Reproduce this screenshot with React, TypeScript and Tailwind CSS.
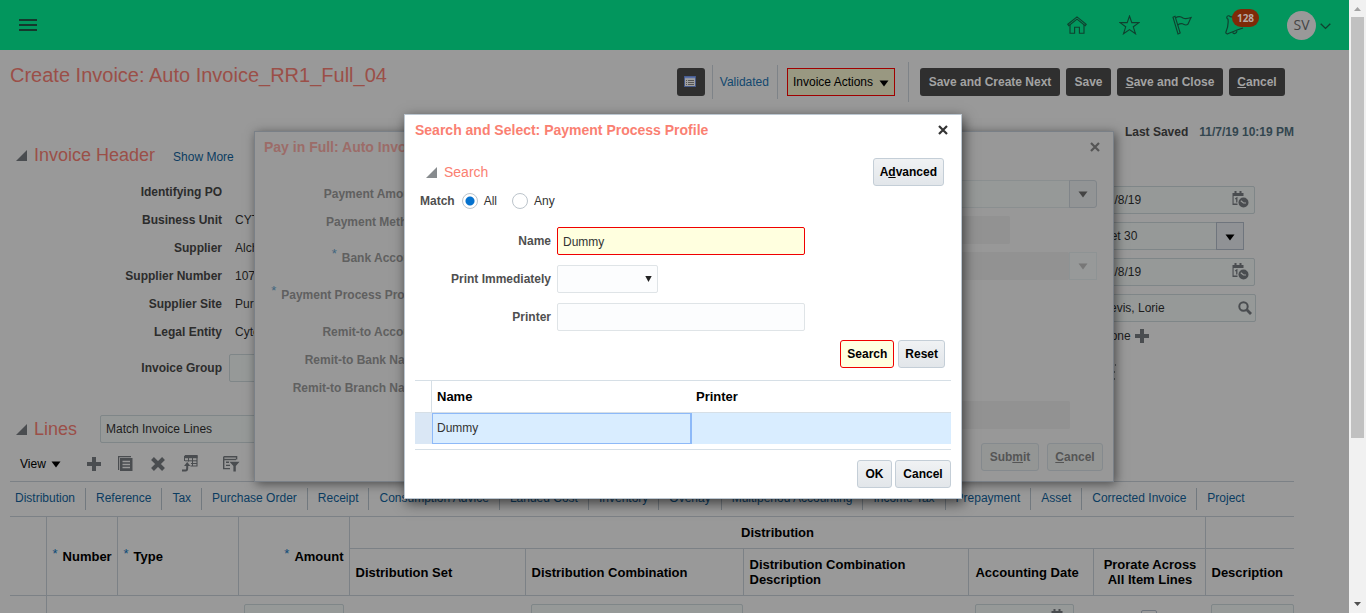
import type { ReactNode } from "react";

const sans = "font-['Liberation_Sans',Arial,sans-serif]";

function Triangle({ className = "" }: { className?: string }) {
  return (
    <svg className={className} width="11" height="11" viewBox="0 0 11 11" aria-hidden="true">
      <path d="M11 0V11H0Z" fill="currentColor" />
    </svg>
  );
}

function Caret({ className = "" }: { className?: string }) {
  return (
    <svg className={className} width="10" height="7" viewBox="0 0 10 7" aria-hidden="true">
      <path d="M0.5 0.5H9.5L5 6.5Z" fill="currentColor" />
    </svg>
  );
}

function CloseIcon() {
  return (
    <svg width="10" height="10" viewBox="0 0 10 10" aria-hidden="true">
      <path d="M1 1L9 9M9 1L1 9" stroke="currentColor" strokeWidth="2.2" fill="none" />
    </svg>
  );
}

function PlusIcon() {
  return (
    <svg width="14" height="14" viewBox="0 0 14 14" aria-hidden="true">
      <path d="M5 0H9V5H14V9H9V14H5V9H0V5H5Z" fill="currentColor" />
    </svg>
  );
}

function CalendarClock() {
  return (
    <svg width="17" height="17" viewBox="0 0 17 17" aria-hidden="true">
      <path d="M0.5 2H11.5V5H1.6V12.6H5.5V14H0.5Z" fill="currentColor" />
      <path d="M2.5 0H4.5V3H2.5ZM7.5 0H9.5V3H7.5Z" fill="currentColor" />
      <path d="M3.2 8L4.8 7V11.4" fill="none" stroke="currentColor" strokeWidth="1.3" />
      <circle cx="11.5" cy="11.5" r="5.8" fill="#979998" />
      <circle cx="11.5" cy="11.5" r="5" fill="currentColor" />
      <path d="M8.8 9.8L11.5 12H14" fill="none" stroke="#989a99" strokeWidth="1.2" />
    </svg>
  );
}

function TopBar() {
  return (
    <header className="flex h-[50px] shrink-0 items-center justify-between bg-[#02965d] pr-[18px] pl-[19px] text-[#10402f]">
      <button type="button" aria-label="Navigator" className="text-[#15392d]">
        <svg width="18" height="13" viewBox="0 0 18 13" aria-hidden="true">
          <path d="M0 1H18M0 6H18M0 11H18" stroke="currentColor" strokeWidth="2" />
        </svg>
      </button>
      <div className="flex items-center">
        <button type="button" aria-label="Home" className="mr-8">
          <svg width="20" height="18" viewBox="0 0 20 18" fill="none" stroke="currentColor" strokeWidth="1.1" aria-hidden="true">
            <path d="M0.8 8.3L10 0.9L19.2 8.3L18.2 9.6L10 3.1L1.8 9.6Z" />
            <path d="M3 8.8V17.3H7.6V11.3H12.4V17.3H17V8.8" />
          </svg>
        </button>
        <button type="button" aria-label="Favorites" className="mr-8">
          <svg width="21" height="20" viewBox="0 0 21 20" fill="none" stroke="currentColor" strokeWidth="1.1" aria-hidden="true">
            <path d="M10.5 1L12.8 7.6H20L14.3 11.8L16.5 18.8L10.5 14.6L4.5 18.8L6.7 11.8L1 7.6H8.2Z" />
          </svg>
        </button>
        <button type="button" aria-label="Watchlist" className="mr-8">
          <svg width="20" height="20" viewBox="0 0 20 20" fill="none" stroke="currentColor" strokeWidth="1.1" aria-hidden="true">
            <path d="M1 2.2L3 1.2L8.2 18L6 19Z" />
            <path d="M3.6 2.8C7 0.6 9.2 1.6 11 3C13.4 4.4 15.6 3.8 19 2.6C17.6 5 17 7.6 15.6 9.6C13.4 10.8 12 9.4 10.6 8.8C8.8 8.4 7.4 8.8 5.6 10" />
          </svg>
        </button>
        <button type="button" aria-label="Notifications" className="relative mr-[29px] w-[34px] pl-px text-left">
          <svg width="20" height="20" viewBox="0 0 20 20" fill="none" stroke="currentColor" strokeWidth="1.2" aria-hidden="true">
            <path d="M5 1.6C4.2 0.2 2 0.6 1.8 2.2C1.7 3.2 2.2 3.8 3 4.2C3.6 9 2.4 14 0.8 17.4C1 18.6 1.6 19 2.8 18.8C6.4 17 11 15.4 18 13" />
            <path d="M5 1.6L12 2.6" />
            <path d="M7.6 17.2C8.4 19.4 11.8 18.8 12 15.8" />
          </svg>
          <span className="absolute -top-[6px] left-2 flex h-[18px] w-[27px] items-center justify-center rounded-full bg-[#7f2a08] font-['Open_Sans',sans-serif] text-[10px] font-bold text-[#b5aaa5]">
            128
          </span>
        </button>
        <button type="button" aria-label="Settings and actions" className="flex items-center gap-1">
          <span className="flex h-[29px] w-[29px] items-center justify-center rounded-full bg-[#999] font-['Open_Sans',sans-serif] text-sm text-[#454545]">
            SV
          </span>
          <svg className="mt-[2px]" width="11" height="7" viewBox="0 0 11 7" fill="none" stroke="currentColor" strokeWidth="1.4" aria-hidden="true">
            <path d="M0.7 0.8L5.5 5.4L10.3 0.8" />
          </svg>
        </button>
      </div>
    </header>
  );
}

const darkButton = "h-7 rounded-[3px] bg-[#2f2f2f] text-xs font-bold text-[#a3a3a3]";

function TitleRow() {
  return (
    <div className="flex items-start justify-between pt-3 pr-16 pl-[10px]">
      <h1 className="text-xl leading-[26px] text-[#9b4f48]">Create Invoice: Auto Invoice_RR1_Full_04</h1>
      <div className="flex h-10 items-center">
        <button type="button" aria-label="Attachments" className="flex h-7 w-7 items-center justify-center rounded-[3px] bg-[#2f2f2f]">
          <svg width="13" height="12" viewBox="0 0 13 12" aria-hidden="true">
            <rect x="0.5" y="0.5" width="11" height="10" fill="#a0a0a0" stroke="#465a8a" />
            <path d="M1 1.5H11" stroke="#5a70a8" strokeWidth="1.5" />
            <path d="M2 4.5H3M2 6.5H3M2 8.5H3M4 4.5H10M4 6.5H10M4 8.5H10" stroke="#555" />
          </svg>
        </button>
        <span className="mr-[7px] ml-[7px] h-[34px] w-px bg-[#7e8388]" />
        <a href="#validated" className="text-xs text-[#12486f]">Validated</a>
        <span className="mr-[9px] ml-2 h-[34px] w-px bg-[#7e8388]" />
        <button type="button" className="flex h-7 items-center gap-[6px] border border-[#a00000] bg-[#999881] px-[5px] text-xs text-black">
          Invoice Actions
          <Caret className="mt-[3px]" />
        </button>
        <span className="mr-[11px] ml-[13px] h-10 w-px bg-[#7e8388]" />
        <div className="flex gap-[6px]">
          <button type="button" className={`${darkButton} w-[140px]`}>Save and Create Next</button>
          <button type="button" className={`${darkButton} w-[45px]`}>Save</button>
          <button type="button" className={`${darkButton} w-[106px]`}><u>S</u>ave and Close</button>
          <button type="button" className={`${darkButton} w-14`}><u>C</u>ancel</button>
        </div>
      </div>
    </div>
  );
}

const headerFields = [
  ["Identifying PO", ""],
  ["Business Unit", "CYTO US"],
  ["Supplier", "Alchemy"],
  ["Supplier Number", "1072"],
  ["Supplier Site", "Purchase"],
  ["Legal Entity", "Cytomx"],
];

const pageField = "h-7 rounded-[2px] border border-[#7f8688] bg-[#969998] px-[5px] text-xs text-[#1c1c1c]";

function InvoiceHeader() {
  return (
    <section>
      <div className="flex justify-end gap-[11px] pt-5 pr-[55px] text-xs leading-5 font-bold">
        <span className="text-[#2c2c2c]">Last Saved</span>
        <span className="text-[#33464f]">11/7/19 10:19 PM</span>
      </div>
      <div className="flex h-[26px] items-center pl-4">
        <Triangle className="text-[#4a4d50]" />
        <h2 className="ml-[7px] text-lg text-[#9b4f48]">Invoice Header</h2>
        <a href="#more" className="mt-[3px] ml-[18px] text-xs text-[#0b3c61]">Show More</a>
      </div>
      <div className="flex h-[244px] justify-between pt-[10px] pr-[92px]">
        <dl className="text-xs">
          {headerFields.map(([label, value]) => (
            <div key={label} className="flex h-7 items-center">
              <dt className="w-[222px] text-right font-bold text-[#2c2c2c]">{label}</dt>
              <dd className="pl-[13px] text-[#1c1c1c]">{value}</dd>
            </div>
          ))}
          <div className="flex h-11 items-center">
            <dt className="w-[222px] text-right font-bold text-[#2c2c2c]">
              <label htmlFor="group">Invoice Group</label>
            </dt>
            <dd className="pl-[7px]">
              <input id="group" className={`${pageField} w-40`} />
            </dd>
          </div>
        </dl>
        <div className="flex w-[161px] flex-col items-start gap-2 pt-2 text-xs text-[#1c1c1c]">
          <div className="relative w-[159px]">
            <input aria-label="Invoice date" defaultValue="11/8/19" className={`${pageField} w-full`} />
            <button type="button" aria-label="Pick invoice date" className="absolute top-[5px] right-[6px] text-[#4a4d50]"><CalendarClock /></button>
          </div>
          <div className="flex w-[148px]">
            <input aria-label="Payment terms" defaultValue="Net 30" className={`${pageField} min-w-0 flex-1 rounded-r-none border-r-0`} />
            <button type="button" aria-label="Open payment terms" className="flex w-7 items-center justify-center border border-[#6f757d] bg-[#909295] pt-[2px] text-black"><Caret /></button>
          </div>
          <div className="relative w-[159px]">
            <input aria-label="Terms date" defaultValue="11/8/19" className={`${pageField} w-full`} />
            <button type="button" aria-label="Pick terms date" className="absolute top-[5px] right-[6px] text-[#4a4d50]"><CalendarClock /></button>
          </div>
          <div className="relative w-40">
            <input aria-label="Requester" defaultValue="Bevis, Lorie" className={`${pageField} w-full`} />
            <button type="button" aria-label="Find requester" className="absolute top-[7px] right-[4px] text-[#4a4d50]">
              <svg width="14" height="14" viewBox="0 0 14 14" fill="none" stroke="currentColor" aria-hidden="true">
                <circle cx="5.5" cy="5.5" r="4.2" strokeWidth="2" />
                <path d="M8.8 8.8L13 13" strokeWidth="2.8" />
              </svg>
            </button>
          </div>
          <div className="flex h-3 items-center gap-1 pl-[6px]">
            None
            <button type="button" aria-label="Add attachment" className="text-[#4a4d50]"><PlusIcon /></button>
          </div>
          <svg className="mt-[14px] ml-[12px]" width="9" height="17" viewBox="0 0 9 17" aria-hidden="true">
            <path d="M1 1H8M1 5H6M5 8H8M1 11H7M5 15H8" stroke="#44494d" strokeWidth="1.5" strokeDasharray="2 1" />
          </svg>
        </div>
      </div>
    </section>
  );
}

const tabs = [
  "Distribution", "Reference", "Tax", "Purchase Order", "Receipt", "Consumption Advice", "Landed Cost", "Inventory",
  "Overlay", "Multiperiod Accounting", "Income Tax", "Prepayment", "Asset", "Corrected Invoice", "Project",
];

function Required() {
  return <span className="relative -top-[3px] mr-[5px] font-normal text-[#0b4a78]">*</span>;
}

const th = "border border-[#7c8186] pr-[5px] pl-[6px] leading-[15px] font-bold";
const cell = "border-l border-[#7c8186] px-[5px] pt-2 align-top first:border-l-0";
const cellInput = "block h-7 w-full rounded-[2px] border border-[#7f8688] bg-[#969998]";

function Lines() {
  return (
    <section className="pl-[10px]">
      <div className="flex h-[34px] items-center pl-[6px]">
        <Triangle className="text-[#4a4d50]" />
        <h2 className="ml-[7px] w-[66px] text-lg text-[#9b4f48]">Lines</h2>
        <select aria-label="Line action" className={`${pageField} w-[190px] appearance-none`}>
          <option>Match Invoice Lines</option>
        </select>
      </div>
      <div className="mr-[55px] flex h-[36px] items-center border-b border-[#7c8186] pl-[10px] text-[#4a4d50]">
        <button type="button" className="flex items-center gap-[5px] text-xs text-black">View <Caret className="mt-[2px]" /></button>
        <button type="button" aria-label="Add line" className="ml-[26px]"><PlusIcon /></button>
        <button type="button" aria-label="Duplicate" className="ml-[17px]">
          <svg width="15" height="15" viewBox="0 0 15 15" aria-hidden="true">
            <path d="M0.6 14V0.6H13" fill="none" stroke="currentColor" strokeWidth="1.2" />
            <path d="M2 2H14.5V15H2Z" fill="currentColor" />
            <path d="M4.5 5.5H12M4.5 8.5H12M4.5 11.5H12" stroke="#999" strokeWidth="1.3" />
          </svg>
        </button>
        <button type="button" aria-label="Delete" className="ml-[18px]">
          <svg width="14" height="14" viewBox="0 0 14 14" aria-hidden="true">
            <path d="M1.5 1.5L12.5 12.5M12.5 1.5L1.5 12.5" stroke="currentColor" strokeWidth="4" />
          </svg>
        </button>
        <button type="button" aria-label="Export rows" className="ml-[17px]">
          <svg width="16" height="17" viewBox="0 0 16 17" aria-hidden="true">
            <path d="M3 0.5H15V11H8.5" fill="none" stroke="currentColor" strokeWidth="1.1" />
            <path d="M2.5 0.5H15.5V3.2H2.5Z" fill="currentColor" />
            <path d="M2.5 1V6M6.5 3V6.5M10.5 3V11M3 5.8H15M9 8.5H15" fill="none" stroke="currentColor" />
            <path d="M0 15.5H3.5C5 15.5 5.2 14.5 5.2 13V9.5" fill="none" stroke="currentColor" strokeWidth="2" />
            <path d="M2 11L5.2 7L8.4 11Z" fill="currentColor" />
          </svg>
        </button>
        <button type="button" aria-label="Filter" className="ml-[25px]">
          <svg width="17" height="16" viewBox="0 0 17 16" aria-hidden="true">
            <path d="M0.7 0.7H13.6V3.6M0.7 0.7V12.6H7" fill="none" stroke="currentColor" strokeWidth="1.4" />
            <path d="M1 3.5H13" stroke="currentColor" strokeWidth="1.4" />
            <path d="M3 6.2H6M3 9.4H7" stroke="currentColor" strokeWidth="1.4" />
            <path d="M6.5 5.8H16.5L12.8 10V15.5H10.4V10Z" fill="currentColor" />
          </svg>
        </button>
      </div>
      <nav className="mr-[55px] flex h-[34px] items-center text-xs whitespace-nowrap text-[#0b3c61]">
        {tabs.map((tab) => (
          <a key={tab} href="#lines" className="flex h-[22px] items-center border-r border-[#72797f] px-[10px] pb-[3px] first:pl-[5px] last:border-r-0">
            {tab}
          </a>
        ))}
      </nav>
      <div className="mr-[55px]">
        <table className="w-full table-fixed border-collapse border-t border-[#7c8186] text-[13px] text-black">
          <colgroup>
            <col className="w-[36px]" />
            <col className="w-[71px]" />
            <col className="w-[121px]" />
            <col className="w-[111px]" />
            <col className="w-[176px]" />
            <col className="w-[218px]" />
            <col />
            <col className="w-[125px]" />
            <col className="w-[111px]" />
            <col className="w-[89px]" />
          </colgroup>
          <thead>
            <tr className="h-8">
              <th rowSpan={2} className={`${th} border-l-0`} />
              <th rowSpan={2} className={`${th} text-left whitespace-nowrap`}><Required />Number</th>
              <th rowSpan={2} className={`${th} text-left`}><Required />Type</th>
              <th rowSpan={2} className={`${th} text-right`}><Required />Amount</th>
              <th colSpan={5} className={th}>Distribution</th>
              <th className={`${th} border-r-0`} />
            </tr>
            <tr className="h-[47px]">
              <th className={`${th} text-left`}>Distribution Set</th>
              <th className={`${th} text-left`}>Distribution Combination</th>
              <th className={`${th} text-left`}>Distribution Combination Description</th>
              <th className={`${th} text-left whitespace-nowrap`}>Accounting Date</th>
              <th className={th}>Prorate Across All Item Lines</th>
              <th className={`${th} border-r-0 text-left`}>Description</th>
            </tr>
          </thead>
          <tbody>
            <tr>
              <td className={cell} />
              <td className={cell} />
              <td className="pt-2" />
              <td className="pt-2 pr-[5px] pl-[6px]"><input aria-label="Amount" className={cellInput} /></td>
              <td className="pt-2" />
              <td className="pt-2 pl-[6px]"><input aria-label="Distribution combination" className={cellInput} /></td>
              <td className="pt-2" />
              <td className="pt-2 pr-5 pl-[6px]">
                <div className="relative">
                  <input aria-label="Accounting date" className={cellInput} />
                  <button type="button" aria-label="Pick accounting date" className="absolute top-[5px] right-[6px] text-[#4a4d50]"><CalendarClock /></button>
                </div>
              </td>
              <td className="pt-[14px] text-center align-top">
                <input type="checkbox" aria-label="Prorate across all item lines" className="h-4 w-4 appearance-none rounded-[2px] border border-[#6f757d]" />
              </td>
              <td className="pt-2 pl-[6px]"><input aria-label="Description" className={cellInput} /></td>
            </tr>
          </tbody>
        </table>
      </div>
    </section>
  );
}

function Scrollbar() {
  return (
    <div className="flex w-[17px] shrink-0 flex-col items-center bg-[#f1f1f1]" aria-hidden="true">
      <svg width="17" height="17" viewBox="0 0 17 17"><path d="M5 11L8.5 7L12 11Z" fill="#a3a3a3" /></svg>
      <div className="h-[421px] w-[13px] bg-[#c1c1c1]" />
      <svg className="mt-auto" width="17" height="17" viewBox="0 0 17 17"><path d="M5 6L8.5 10L12 6Z" fill="#505050" /></svg>
    </div>
  );
}

const payFill = "h-7 rounded-[2px] bg-[#929292]";
const payButton = "h-7 rounded-[3px] border border-[#858a8e] bg-[#949695] text-xs font-bold text-[#555]";

function PayRow({ label, required, height, children }: { label: string; required?: boolean; height: string; children?: ReactNode }) {
  return (
    <div className={`flex items-center ${height}`}>
      <span className="w-[167px] shrink-0 text-right text-xs font-bold whitespace-nowrap text-[#606060]">
        {required && <span className="relative -top-1 mr-[5px] text-[13px] font-normal text-[#41667f]">*</span>}
        {label}
      </span>
      <div className="flex flex-1 pl-[7px]">{children}</div>
    </div>
  );
}

function PayInFullDialog() {
  return (
    <div className="absolute inset-0 flex items-center justify-center pl-0.5">
      <section aria-label="Pay in Full" className="h-[351px] w-[860px] border border-[#7a8087] bg-[#989898] shadow-[2px_2px_10px_rgba(0,0,0,0.5)]">
        <div className="flex h-[30px] items-center justify-between pr-[13px] pl-[9px]">
          <h2 className="text-sm font-bold text-[#9c6c68]">Pay in Full: Auto Invoice_RR1_Full_04</h2>
          <button type="button" aria-label="Close" className="text-[#555]"><CloseIcon /></button>
        </div>
        <div className="pt-[18px]">
          <PayRow label="Payment Amount" height="h-7">
            <input aria-label="Payment Amount" className="mr-[-1px] h-7 flex-1 border border-[#8a8f90] bg-[#969998]" />
            <button type="button" aria-label="Open amounts" className="mr-4 flex h-7 w-7 items-center justify-center rounded-r-[3px] border border-[#808589] bg-[#929495] text-[#444]"><Caret /></button>
          </PayRow>
          <PayRow label="Payment Method" height="h-7"><div className={`${payFill} mt-4 mr-[103px] flex-1`} /></PayRow>
          <PayRow label="Bank Account" required height="h-11">
            <div className={`${payFill} mt-4 flex-1`} />
            <button type="button" disabled aria-label="Open bank accounts" className="mt-4 mr-4 flex h-7 w-7 items-center justify-center border border-[#8e9394] bg-[#979999] text-[#777]"><Caret /></button>
          </PayRow>
          <PayRow label="Payment Process Profile" required height="h-[30px]" />
          <div className="h-[8px]" />
          <PayRow label="Remit-to Account" height="h-7" />
          <PayRow label="Remit-to Bank Name" height="h-7" />
          <PayRow label="Remit-to Branch Name" height="h-7" />
          <PayRow label="" height="h-[26px]"><div className={`${payFill} mr-[43px] flex-1`} /></PayRow>
        </div>
        <div className="flex justify-end gap-2 pt-[15px] pr-[10px]">
          <button type="button" className={`${payButton} w-[58px]`}>Sub<u>m</u>it</button>
          <button type="button" className={`${payButton} w-14`}><u>C</u>ancel</button>
        </div>
      </section>
    </div>
  );
}

const lightButton = "h-7 rounded-[3px] border border-[#c4ced7] bg-linear-to-b from-[#f0f2f4] to-[#e2e6ea] px-[6px] text-xs font-bold text-black";
const lightField = "h-7 rounded-[2px] border border-[#dfe4e7] bg-[#fcfdfe] px-[5px] text-xs text-[#333]";
const fieldLabel = "w-[136px] text-right text-xs font-bold text-[#4f4f4f]";
const radio =
  "h-4 w-4 appearance-none rounded-full border border-[#bcc4cb] bg-white checked:bg-[radial-gradient(circle,#0572ce_4px,#fff_5px)]";

function SearchDialog() {
  return (
    <div className="absolute inset-0 flex items-center justify-center">
      <section
        role="dialog"
        aria-label="Search and Select: Payment Process Profile"
        className="w-[558px] border border-[#bcc7d1] bg-white px-[10px] pb-[10px] shadow-[2px_4px_12px_rgba(0,0,0,0.6)]"
      >
        <div className="flex h-[30px] items-center justify-between pr-[3px]">
          <h2 className="text-sm font-bold text-[#fa8072]">Search and Select: Payment Process Profile</h2>
          <button type="button" aria-label="Close" className="text-[#333]"><CloseIcon /></button>
        </div>
        <div className="flex items-center justify-between pt-[13px] pr-[7px] pl-[11px]">
          <div className="flex items-center gap-[7px]">
            <Triangle className="text-[#878b8e]" />
            <h3 className="text-sm text-[#fa8072]">Search</h3>
          </div>
          <button type="button" className={lightButton}>A<u>d</u>vanced</button>
        </div>
        <div className="flex h-[30px] items-center pl-[5px] text-xs text-[#333]" role="radiogroup" aria-labelledby="match">
          <span id="match" className="mr-[7px] font-bold text-[#4f4f4f]">Match</span>
          <input type="radio" id="all" name="match" defaultChecked className={radio} />
          <label htmlFor="all" className="mr-[15px] ml-[6px]">All</label>
          <input type="radio" id="any" name="match" className={radio} />
          <label htmlFor="any" className="ml-[6px]">Any</label>
        </div>
        <div className="flex flex-col gap-[10px] pt-[11px]">
          <div className="flex items-center gap-[6px]">
            <label htmlFor="name" className={fieldLabel}>Name</label>
            <input id="name" defaultValue="Dummy" className="h-7 w-[248px] rounded-[2px] border border-[#f00000] bg-[#ffffdf] px-[5px] pt-[2px] text-xs text-[#333]" />
          </div>
          <div className="flex items-center gap-[6px]">
            <label htmlFor="immediately" className={fieldLabel}>Print Immediately</label>
            <div className="relative">
              <select id="immediately" className={`${lightField} block w-[101px] appearance-none`}>
                <option></option>
                <option>Yes</option>
                <option>No</option>
              </select>
              <svg className="pointer-events-none absolute top-[11px] right-[6px]" width="7" height="6" viewBox="0 0 7 6" aria-hidden="true">
                <path d="M0.3 0H6.7L3.5 6Z" fill="#222" />
              </svg>
            </div>
          </div>
          <div className="flex items-center gap-[6px]">
            <label htmlFor="printer" className={fieldLabel}>Printer</label>
            <input id="printer" className={`${lightField} w-[248px]`} />
          </div>
        </div>
        <div className="flex justify-end gap-1 pt-[9px] pr-[6px]">
          <button type="button" className="h-7 w-[54px] rounded-[3px] border border-[#f00000] bg-[#ffffdf] text-xs font-bold text-black">Search</button>
          <button type="button" className={lightButton}>Reset</button>
        </div>
        <div className="mt-3 border-y border-[#d6dfe6] pb-[5px]">
          <table className="w-full table-fixed border-separate border-spacing-0">
            <colgroup>
              <col className="w-[17px]" />
              <col className="w-[260px]" />
              <col />
            </colgroup>
            <thead>
              <tr className="h-8 text-left text-[13px] text-black">
                <th className="border-r border-b border-[#d6dfe6]" />
                <th className="border-b border-[#d6dfe6] px-[5px]">Name</th>
                <th className="border-b border-[#d6dfe6] px-1">Printer</th>
              </tr>
            </thead>
            <tbody>
              <tr className="h-[31px] text-xs text-[#333]">
                <td className="bg-[#dae7f5]" />
                <td className="border border-r-2 border-[#8db9f8] bg-[#d9edff] px-1 pb-[2px]">Dummy</td>
                <td className="bg-[#d9edff]" />
              </tr>
            </tbody>
          </table>
        </div>
        <div className="flex justify-end gap-[3px] pt-[10px]">
          <button type="button" className={`${lightButton} w-[35px]`}>OK</button>
          <button type="button" className={`${lightButton} w-14`}>Cancel</button>
        </div>
      </section>
    </div>
  );
}

export default function App() {
  return (
    <div className={`${sans} relative flex h-screen overflow-hidden`}>
      <main className="flex min-w-0 flex-1 flex-col overflow-hidden bg-[#999]">
        <TopBar />
        <TitleRow />
        <InvoiceHeader />
        <Lines />
      </main>
      <Scrollbar />
      <PayInFullDialog />
      <SearchDialog />
    </div>
  );
}
